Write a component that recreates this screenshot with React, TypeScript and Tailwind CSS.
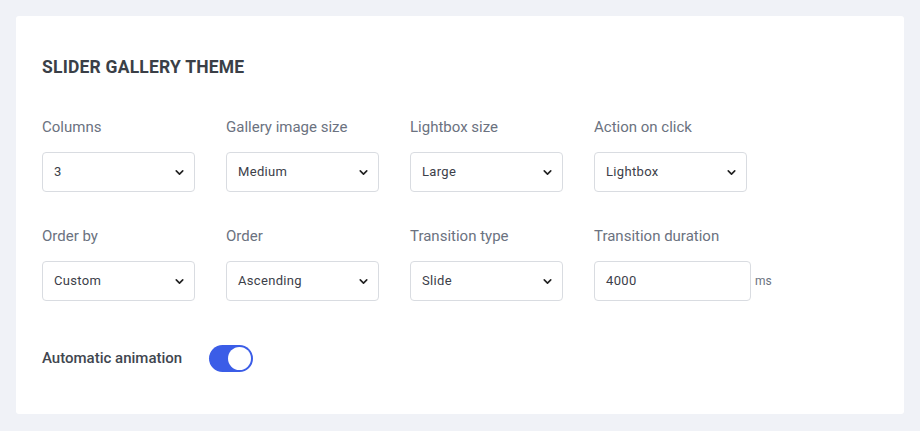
const row1 = [
  { label: "Columns", value: "3" },
  { label: "Gallery image size", value: "Medium" },
  { label: "Lightbox size", value: "Large" },
  { label: "Action on click", value: "Lightbox" },
];
const row2 = [
  { label: "Order by", value: "Custom" },
  { label: "Order", value: "Ascending" },
  { label: "Transition type", value: "Slide" },
];

function Select({ label, value }: { label: string; value: string }) {
  return (
    <div className="w-[153px]">
      <div className="text-[15px] leading-[22px] text-[#6b7280]">{label}</div>
      <div className="mt-[14px] flex h-[40px] items-center justify-between rounded-[4px] border border-[#d9dce1] bg-white pl-[11px] pr-[8px] text-[13px] tracking-wide text-[#3c4049]">
        <span>{value}</span>
        <svg width="13" height="13" viewBox="0 0 24 24" fill="none" stroke="#222" strokeWidth="3" strokeLinecap="round" strokeLinejoin="round">
          <path d="M6 9l6 6 6-6" />
        </svg>
      </div>
    </div>
  );
}

export default function App() {
  return (
    <div className="min-h-[431px] bg-[#f0f2f7] p-4" style={{ fontFamily: "Roboto, 'Noto Sans', sans-serif" }}>
      <div className="h-[398px] rounded-[3px] bg-white pl-[26px] pt-[39px]">
        <h2 className="text-[17.5px] font-bold leading-[24px] tracking-[0.2px] text-[#3a3f47]">SLIDER GALLERY THEME</h2>
        <div className="mt-[37px] flex gap-[31px]">
          {row1.map((s) => (
            <Select key={s.label} {...s} />
          ))}
        </div>
        <div className="mt-[33px] flex gap-[31px]">
          {row2.map((s) => (
            <Select key={s.label} {...s} />
          ))}
          <div>
            <div className="text-[15px] leading-[22px] text-[#6b7280]">Transition duration</div>
            <div className="mt-[14px] flex items-start gap-[4px]">
              <div className="flex h-[40px] w-[157px] items-center rounded-[4px] border border-[#d9dce1] pl-[11px] text-[13px] tracking-wide text-[#3c4049]">
                4000
              </div>
              <span className="mt-[11px] text-[12px] text-[#6b7280]">ms</span>
            </div>
          </div>
        </div>
        <div className="mt-[44px] flex items-center gap-[27px]">
          <span className="text-[15px] font-medium text-[#41464f]">Automatic animation</span>
          <div className="flex h-[27px] w-[44px] items-center justify-end rounded-full bg-[#3b5de7] pr-[2px]">
            <div className="h-[23px] w-[23px] rounded-full bg-white" />
          </div>
        </div>
      </div>
    </div>
  );
}
